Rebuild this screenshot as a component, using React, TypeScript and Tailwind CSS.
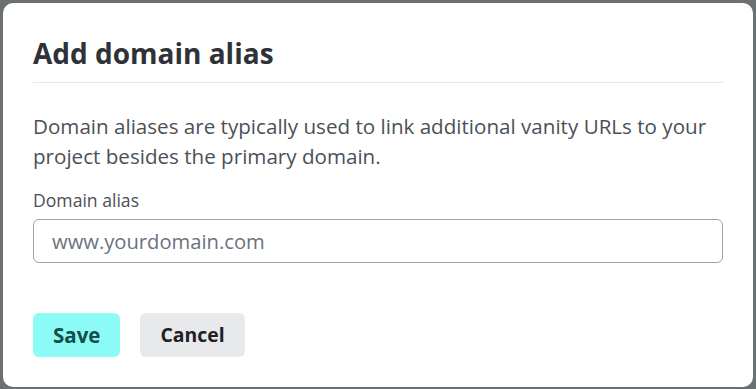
export default function App() {
  return (
    <div className="w-[756px] h-[389px] bg-[#6b7073] pt-[3px] pl-[3px] pr-[3px] pb-[2px]" style={{ fontFamily: '"Open Sans", "Noto Sans", sans-serif' }}>
      <div className="h-full bg-white rounded-[10px] px-[30px] pt-[30px]">
        <h1 className="text-[28px] leading-[40px] font-bold text-[#2f3236] pb-[9px] border-b border-[#e5e7eb]">Add domain alias</h1>
        <p className="mt-[28px] text-[20.6px] leading-[30px] text-[#4b5057]">
          Domain aliases are typically used to link additional vanity URLs to your project besides the primary domain.
        </p>
        <label className="block mt-[17px] text-[17.6px] leading-[24px] text-[#4b5057]">Domain alias</label>
        <input
          className="mt-[7px] w-full h-[44px] rounded-[6px] border border-[#9ca3af] px-[18px] text-[20.2px] text-[#374151] placeholder:text-[#6b7280] outline-none"
          placeholder="www.yourdomain.com"
        />
        <div className="mt-[50px] flex gap-[20px]">
          <button className="h-[44px] px-[20px] rounded-[6px] bg-[#8cfbf6] text-[#134e4a] text-[20.5px] font-bold">Save</button>
          <button className="h-[44px] px-[20px] rounded-[6px] bg-[#e8e9eb] text-[#1f2023] text-[19.4px] font-bold">Cancel</button>
        </div>
      </div>
    </div>
  );
}
